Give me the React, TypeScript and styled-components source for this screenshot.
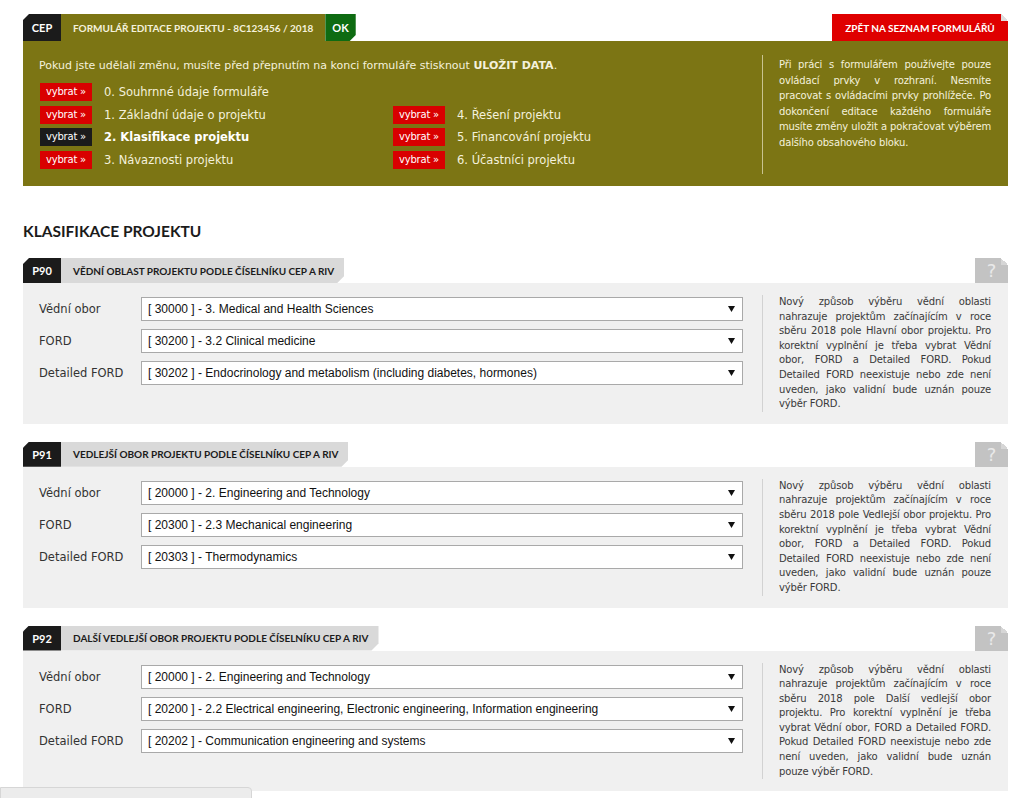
import React from "react";
import styled, { createGlobalStyle } from "styled-components";

const GlobalStyle = createGlobalStyle`
  body {
    margin: 0;
    background: #fff;
    font-family: "DejaVu Sans", "Noto Sans", sans-serif;
    color: #333;
  }
`;

const titleFont = `"Lato", "Liberation Sans", sans-serif`;

const menuLeft = [
  { label: "0. Souhrnné údaje formuláře" },
  { label: "1. Základní údaje o projektu" },
  { label: "2. Klasifikace projektu", active: true },
  { label: "3. Návaznosti projektu" },
];

const menuRight = [
  { label: "4. Řešení projektu" },
  { label: "5. Financování projektu" },
  { label: "6. Účastníci projektu" },
];

const noteText = (field: string) =>
  `Nový způsob výběru vědní oblasti nahrazuje projektům začínajícím v roce sběru 2018 pole ${field}. Pro korektní vyplnění je třeba vybrat Vědní obor, FORD a Detailed FORD. Pokud Detailed FORD neexistuje nebo zde není uveden, jako validní bude uznán pouze výběr FORD.`;

const sections = [
  {
    code: "P90",
    title: "VĚDNÍ OBLAST PROJEKTU PODLE ČÍSELNÍKU CEP A RIV",
    values: [
      "[ 30000 ] - 3. Medical and Health Sciences",
      "[ 30200 ] - 3.2 Clinical medicine",
      "[ 30202 ] - Endocrinology and metabolism (including diabetes, hormones)",
    ],
    note: noteText("Hlavní obor projektu"),
  },
  {
    code: "P91",
    title: "VEDLEJŠÍ OBOR PROJEKTU PODLE ČÍSELNÍKU CEP A RIV",
    values: [
      "[ 20000 ] - 2. Engineering and Technology",
      "[ 20300 ] - 2.3 Mechanical engineering",
      "[ 20303 ] - Thermodynamics",
    ],
    note: noteText("Vedlejší obor projektu"),
  },
  {
    code: "P92",
    title: "DALŠÍ VEDLEJŠÍ OBOR PROJEKTU PODLE ČÍSELNÍKU CEP A RIV",
    values: [
      "[ 20000 ] - 2. Engineering and Technology",
      "[ 20200 ] - 2.2 Electrical engineering, Electronic engineering, Information engineering",
      "[ 20202 ] - Communication engineering and systems",
    ],
    note: noteText("Další vedlejší obor projektu"),
  },
];

const fieldLabels = ["Vědní obor", "FORD", "Detailed FORD"];

const App = () => {
  return (
    <>
      <GlobalStyle />
      <Page>
        <TopBar>
          <Crumbs>
            <Tag tone="dark" cut="topLeft">CEP</Tag>
            <Tag tone="olive">FORMULÁŘ EDITACE PROJEKTU - 8C123456 / 2018</Tag>
            <Tag tone="green" cut="bottomRight">OK</Tag>
          </Crumbs>
          <BackButton>ZPĚT NA SEZNAM FORMULÁŘŮ</BackButton>
        </TopBar>

        <OlivePanel>
          <NavArea>
            <Warning>
              Pokud jste udělali změnu, musíte před přepnutím na konci formuláře
              stisknout <b>ULOŽIT DATA</b>.
            </Warning>
            <Menu>
              <MenuColumn>
                {menuLeft.map((m) => (
                  <MenuRow key={m.label}>
                    <PickButton active={m.active}>vybrat »</PickButton>
                    <MenuLabel active={m.active}>{m.label}</MenuLabel>
                  </MenuRow>
                ))}
              </MenuColumn>
              <MenuColumn offset>
                {menuRight.map((m) => (
                  <MenuRow key={m.label}>
                    <PickButton>vybrat »</PickButton>
                    <MenuLabel>{m.label}</MenuLabel>
                  </MenuRow>
                ))}
              </MenuColumn>
            </Menu>
          </NavArea>
          <PanelNote>
            Při práci s formulářem používejte pouze ovládací prvky v rozhraní.
            Nesmíte pracovat s ovládacími prvky prohlížeče. Po dokončení editace
            každého formuláře musíte změny uložit a pokračovat výběrem dalšího
            obsahového bloku.
          </PanelNote>
        </OlivePanel>

        <Heading>KLASIFIKACE PROJEKTU</Heading>

        {sections.map((s) => (
          <Section key={s.code}>
            <SectionHead>
              <Crumbs>
                <Code>{s.code}</Code>
                <TitleTab>{s.title}</TitleTab>
              </Crumbs>
              <HelpBox>?</HelpBox>
            </SectionHead>
            <SectionBody>
              <Fields>
                {s.values.map((v, i) => (
                  <FieldRow key={fieldLabels[i]}>
                    <FieldLabel>{fieldLabels[i]}</FieldLabel>
                    <SelectBox>
                      <span>{v}</span>
                      <Arrow viewBox="0 0 7 6">
                        <path d="M0 0h7L3.5 6z" fill="#111" />
                      </Arrow>
                    </SelectBox>
                  </FieldRow>
                ))}
              </Fields>
              <Note>{s.note}</Note>
            </SectionBody>
          </Section>
        ))}
      </Page>
      <FooterBar />
    </>
  );
};

const Page = styled.div`
  padding: 14px 16px 0 23px;
`;

const TopBar = styled.div`
  display: flex;
  justify-content: space-between;
  height: 27px;
`;

const Crumbs = styled.div`
  display: flex;
  height: 100%;
`;

const toneColors = {
  dark: "#1b1b1b",
  olive: "#7c7514",
  green: "#0e6b12",
};

const Tag = styled.div<{ tone: keyof typeof toneColors; cut?: "topLeft" | "bottomRight" }>`
  display: flex;
  align-items: center;
  padding: 0 12px;
  background: ${(p) => toneColors[p.tone]};
  color: #fff;
  font-family: ${titleFont};
  font-size: 10px;
  font-weight: bold;
  clip-path: ${(p) =>
    p.cut === "topLeft"
      ? "polygon(6px 0, 100% 0, 100% 100%, 0 100%, 0 6px)"
      : p.cut === "bottomRight"
      ? "polygon(0 0, 100% 0, 100% calc(100% - 6px), calc(100% - 6px) 100%, 0 100%)"
      : "none"};
  ${(p) => p.tone === "dark" && "width: 38px; padding: 0; justify-content: center; font-size: 11px;"}
  ${(p) => p.tone === "olive" && "color: #f4f1dc;"}
  ${(p) => p.tone === "green" && "padding: 0 7px; font-size: 11px;"}
`;

const BackButton = styled.div`
  position: relative;
  width: 176px;
  display: flex;
  align-items: center;
  justify-content: center;
  background: #df0000;
  color: #fff;
  font-family: ${titleFont};
  font-size: 10px;
  font-weight: bold;
  &::after {
    content: "";
    position: absolute;
    top: 0;
    right: 0;
    width: 7px;
    height: 7px;
    background: linear-gradient(to bottom left, #fff 50%, #dedede 50%);
  }
`;

const OlivePanel = styled.div`
  display: flex;
  background: #7c7514;
  color: #f4f1dc;
  min-height: 145px;
  box-sizing: border-box;
  padding: 0 17px 0 16px;
`;

const NavArea = styled.div`
  flex: 1;
  padding-top: 17px;
`;

const Warning = styled.div`
  font-size: 11px;
  line-height: 16px;
  margin-bottom: 9px;
`;

const Menu = styled.div`
  display: flex;
`;

const MenuColumn = styled.div<{ offset?: boolean }>`
  display: flex;
  flex-direction: column;
  gap: 4.67px;
  width: 353px;
  padding-top: ${(p) => (p.offset ? "22.67px" : "0")};
`;

const MenuRow = styled.div`
  display: flex;
  align-items: center;
  height: 18px;
  padding-left: 1px;
`;

const PickButton = styled.div<{ active?: boolean }>`
  width: 52px;
  height: 18px;
  line-height: 18px;
  text-align: center;
  background: ${(p) => (p.active ? "#1b1b1b" : "#d90000")};
  color: #fff;
  font-size: 10px;
  letter-spacing: -0.2px;
  margin-right: 12px;
`;

const MenuLabel = styled.div<{ active?: boolean }>`
  font-size: 11.5px;
  font-weight: ${(p) => (p.active ? "bold" : "normal")};
  color: ${(p) => (p.active ? "#fff" : "#f4f1dc")};
`;

const PanelNote = styled.div`
  width: 212px;
  margin: 14px 0 12px;
  padding-left: 16px;
  border-left: 1px solid #c9c390;
  font-size: 10px;
  letter-spacing: -0.15px;
  line-height: 15.5px;
  padding-top: 2px;
  text-align: justify;
`;

const Heading = styled.h2`
  margin: 34px 0 16px;
  font-family: ${titleFont};
  font-size: 15.5px;
  font-weight: bold;
  color: #1b1b1b;
  line-height: 22px;
`;

const Section = styled.div`
  margin-bottom: 18px;
`;

const SectionHead = styled.div`
  display: flex;
  justify-content: space-between;
  height: 25px;
`;

const Code = styled.div`
  width: 38px;
  display: flex;
  align-items: center;
  justify-content: center;
  background: #1b1b1b;
  color: #fff;
  font-family: ${titleFont};
  font-size: 11px;
  font-weight: bold;
  clip-path: polygon(6px 0, 100% 0, 100% 100%, 0 100%, 0 6px);
`;

const TitleTab = styled.div`
  display: flex;
  align-items: center;
  padding: 0 10px 0 12px;
  background: #d9d9d9;
  color: #1b1b1b;
  font-family: ${titleFont};
  font-size: 10px;
  font-weight: bold;
  clip-path: polygon(0 0, 100% 0, 100% calc(100% - 7px), calc(100% - 7px) 100%, 0 100%);
`;

const HelpBox = styled.div`
  position: relative;
  width: 33px;
  display: flex;
  align-items: center;
  justify-content: center;
  background: #c3c3c3;
  color: #e9e9e9;
  font-size: 18px;
  &::after {
    content: "";
    position: absolute;
    top: 0;
    right: 0;
    width: 7px;
    height: 7px;
    background: linear-gradient(to bottom left, #fff 50%, #d6d6d6 50%);
  }
`;

const SectionBody = styled.div`
  display: flex;
  background: #f0f0f0;
  padding: 0 17px 0 16px;
`;

const Fields = styled.div`
  flex: 1;
  display: flex;
  flex-direction: column;
  gap: 8px;
  padding-top: 14px;
`;

const FieldRow = styled.div`
  display: flex;
  align-items: center;
  height: 24px;
`;

const FieldLabel = styled.div`
  width: 102px;
  font-size: 11.5px;
  color: #333;
`;

const SelectBox = styled.div`
  width: 602px;
  height: 24px;
  box-sizing: border-box;
  display: flex;
  align-items: center;
  justify-content: space-between;
  padding: 0 7px 0 6px;
  background: #fff;
  border: 1px solid #a9a9a9;
  font-family: "Liberation Sans", Arial, sans-serif;
  font-size: 12px;
  color: #111;
`;

const Arrow = styled.svg`
  width: 7px;
  height: 6px;
`;

const Note = styled.div`
  width: 212px;
  margin: 12px 0;
  padding-left: 16px;
  border-left: 1px solid #d2d2d2;
  font-size: 10px;
  letter-spacing: -0.15px;
  line-height: 14.6px;
  text-align: justify;
  color: #3a3a3a;
`;

const FooterBar = styled.div`
  position: fixed;
  left: 0;
  bottom: -4px;
  width: 250px;
  height: 13px;
  background: #ececec;
  border: 1px solid #d6d6d6;
  border-radius: 0 4px 0 0;
`;

export default App;
